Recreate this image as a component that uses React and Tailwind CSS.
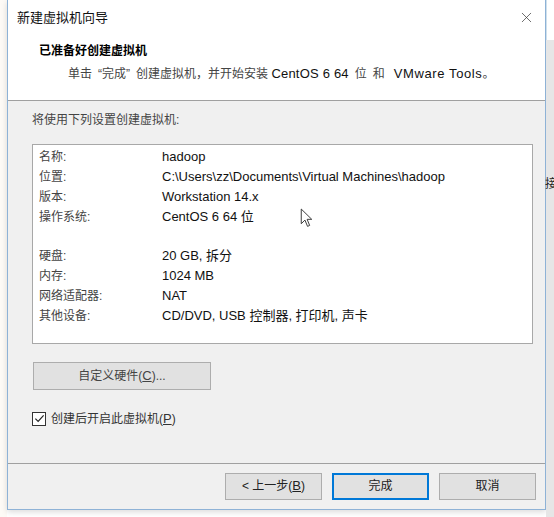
import { X } from 'lucide-react';

const font = { fontFamily: '"Liberation Sans", "Noto Sans CJK SC", sans-serif' };

const rows = [
  ['名称:', 'hadoop'],
  ['位置:', 'C:\\Users\\zz\\Documents\\Virtual Machines\\hadoop'],
  ['版本:', 'Workstation 14.x'],
  ['操作系统:', 'CentOS 6 64 位'],
  null,
  ['硬盘:', '20 GB, 拆分'],
  ['内存:', '1024 MB'],
  ['网络适配器:', 'NAT'],
  ['其他设备:', 'CD/DVD, USB 控制器, 打印机, 声卡'],
];

function Button({ children, primary, className = '' }) {
  return (
    <button
      type="button"
      className={`h-[27px] w-[97px] text-[12px] text-[#222] bg-[#e1e1e1] ${
        primary ? 'border-2 border-[#0078d7]' : 'border border-[#adadad]'
      } ${className}`}
    >
      {children}
    </button>
  );
}

export default function App() {
  return (
    <div className="w-[554px] h-[517px] bg-white flex overflow-hidden text-[#1e1e1e]" style={font}>
      <div className="w-[7px] shrink-0 bg-[#fdfaf6]" />
      <div className="w-[539px] h-[510px] shrink-0 flex flex-col border-x border-b border-[#8eb2d6] bg-[#f0f0f0] shadow-[0_2px_6px_rgba(0,0,0,0.15)]">
        <div className="h-[35px] bg-white flex items-center justify-between pl-[9px] pr-[10px]">
          <span className="text-[13px] text-[#111]">新建虚拟机向导</span>
          <X className="w-[17px] h-[17px] text-[#333]" strokeWidth={1} />
        </div>
        <div className="h-[66px] bg-white border-b border-[#a0a0a0] pl-[31px] pt-[7px]">
          <div className="text-[12px] font-bold text-[#000] leading-[18px]">已准备好创建虚拟机</div>
          <div className="pl-[29px] mt-[5px] text-[12px] leading-[18px] text-[#444] whitespace-nowrap">
            单击<span className="inline-block w-[10px] text-right">“</span>完成<span className="inline-block w-[10px] text-left">”</span>创建虚拟机，并开始安装{' '}
            <span className="text-[13px] text-[#111] tracking-[0.2px]">CentOS 6 64</span>
            <span className="mx-[6px]">位</span>和
            <span className="ml-[9px] text-[13px] text-[#111] tracking-[0.6px]">VMware Tools</span>。
          </div>
        </div>

        <div className="flex-1 pl-[24px] pr-[12px] pt-[10px] relative">
          <div className="text-[12px] leading-[18px] text-[#444]">将使用下列设置创建虚拟机:</div>
          <div className="mt-[15px] h-[200px] bg-white border border-[#a8a8a8] pt-[2px] pl-[6px]">
            {rows.map((r, i) =>
              r ? (
                <div key={i} className="flex h-[20px] items-center">
                  <span className="w-[123px] text-[12px] text-[#444]">{r[0]}</span>
                  <span className="text-[13px] text-[#111]">{r[1]}</span>
                </div>
              ) : (
                <div key={i} className="h-[19px]" />
              )
            )}
          </div>
          <button
            type="button"
            className="mt-[18px] ml-[1px] w-[178px] h-[28px] bg-[#e1e1e1] border border-[#adadad] text-[12px] text-[#444]"
          >
            自定义硬件(<span className="underline text-[13px]">C</span>)...
          </button>
          <label className="mt-[19px] flex items-center gap-[5px] text-[12px] text-[#333]">
            <span className="w-[14px] h-[14px] border border-[#333] bg-white flex items-center justify-center">
              <svg viewBox="0 0 12 12" className="w-[11px] h-[11px]">
                <path d="M1.5 6.2 L4.5 9.2 L10.5 2.5" fill="none" stroke="#222" strokeWidth="1.3" />
              </svg>
            </span>
            <span>
              创建后开启此虚拟机(<span className="underline text-[13px]">P</span>)
            </span>
          </label>
          <svg viewBox="0 0 12 20" className="absolute left-[292px] top-[107px] w-[13px] h-[21px]">
            <path d="M1 1 L1 15 L4.5 11.5 L7 17.5 L9 16.6 L6.6 10.8 L11 10.8 Z" fill="white" stroke="#333" strokeWidth="0.9" />
          </svg>
        </div>

        <div className="h-[46px] border-t border-[#a0a0a0] flex items-center justify-end gap-[10px] pr-[9px] pb-[1px]">
          <Button>
            &lt; 上一步(<span className="underline text-[13px]">B</span>)
          </Button>
          <Button primary>完成</Button>
          <Button>取消</Button>
        </div>
      </div>
      <div className="flex-1 bg-[#e6e6e6] flex flex-col">
        <div className="h-[40px] bg-white border-l border-[#cfe0ec]" />
        <div className="mt-[135px] text-[12px] text-[#222] -ml-[1px] whitespace-nowrap">接</div>
      </div>
    </div>
  );
}
